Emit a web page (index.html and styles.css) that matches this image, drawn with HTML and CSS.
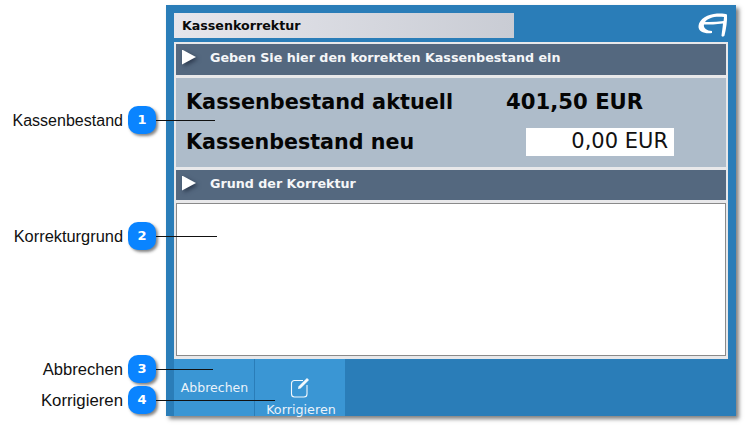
FILE: index.html
```html
<!DOCTYPE html>
<html lang="de">
<head>
<meta charset="utf-8">
<title>Kassenkorrektur</title>
<link rel="stylesheet" href="styles.css">
</head>
<body>
<main class="stage">
  <section class="window">
    <header class="topbar">
      <h1 class="title">Kassenkorrektur</h1>
      <svg class="logo" viewBox="0 0 30 24" width="30" height="24" aria-hidden="true">
        <path fill-rule="evenodd" d="M14 20C7 21 0 19 .5 13C1 6 10 1 19 .5C23 .2 27 .5 29 1.5C29.5 8 28 16 26.5 22.5C26 24 23.5 24 23.5 22.5C24 18 24.7 14 25 10.5C18 11.5 12 11.5 6 11.5C5 15 9 18 14 18ZM7 9C10 5 16 3 26 4L25.6 8C19 9 13 9.3 7 9Z" fill="#fff"/>
      </svg>
    </header>
    <div class="panel">
      <h2 class="band"><span class="arrow"></span>Geben Sie hier den korrekten Kassenbestand ein</h2>
      <div class="balance">
        <div class="row">
          <span class="label label-now">Kassenbestand aktuell</span>
          <span class="current">401,50 EUR</span>
        </div>
        <div class="row">
          <span class="label label-new">Kassenbestand neu</span>
          <span class="amount">0,00 EUR</span>
        </div>
      </div>
      <h2 class="band band-second"><span class="arrow"></span>Grund der Korrektur</h2>
      <div class="reason"></div>
    </div>
    <nav class="actions">
      <button class="action action-cancel" type="button">Abbrechen</button>
      <button class="action action-fix" type="button">
        <svg viewBox="0 0 22 22" width="22" height="22" aria-hidden="true">
          <path d="M14 3.500H5A3 3 0 0 0 2.500 6.500V17A3 3 0 0 0 5.500 20H15A3 3 0 0 0 18 17V8" fill="none" stroke="#f2f8fc" stroke-width="1.1"/>
          <path d="M9 12L9.500 9.500L18 1L20 3L11.500 11.500Z" fill="#f2f8fc"/>
        </svg>
        <span class="action-text">Korrigieren</span>
      </button>
    </nav>
  </section>

  <div class="callout callout-1"><span class="callout-text">Kassenbestand</span><span class="badge">1</span><span class="leader"></span></div>
  <div class="callout callout-2"><span class="callout-text">Korrekturgrund</span><span class="badge">2</span><span class="leader"></span></div>
  <div class="callout callout-3"><span class="callout-text">Abbrechen</span><span class="badge">3</span><span class="leader"></span></div>
  <div class="callout callout-4"><span class="callout-text">Korrigieren</span><span class="badge">4</span><span class="leader"></span></div>
</main>
</body>
</html>
```
FILE: styles.css
```css
* { box-sizing: border-box; }
html, body { margin: 0; background: #fff; }
body { width: 745px; height: 427px; overflow: hidden; }
.stage { position: relative; width: 745px; height: 427px; padding: 5px 0 0 166px; }

.window {
  width: 570px;
  height: 411px;
  padding: 8px 8px 0;
  background: #2a7db8;
  box-shadow: 3px 3px 4px rgba(60, 60, 60, .65);
  display: flex;
  flex-direction: column;
}
.topbar { height: 25px; display: flex; justify-content: space-between; position: relative; }
.title {
  width: 340px;
  height: 25px;
  margin: 0;
  padding-left: 8px;
  font: bold 12.65px/26px "DejaVu Sans", sans-serif;
  color: #0a0a0a;
  background: linear-gradient(90deg, #e6e6ec, #c9ccd4);
}
.logo { position: absolute; right: 0; top: 0; }

.panel {
  margin-top: 4px;
  height: 317px;
  padding: 2px 2px 3px;
  background: #e8e8ea;
  display: flex;
  flex-direction: column;
}
.band {
  height: 31px;
  margin: 0;
  padding: 0 0 5px 6px;
  display: flex;
  align-items: center;
  gap: 14px;
  font: bold 12.7px "DejaVu Sans", sans-serif;
  color: #f4f6f8;
  background: #54687f;
}
.band-second { height: 30px; margin-top: 3px; padding-bottom: 4px; }
.arrow {
  width: 14px;
  height: 15px;
  filter: drop-shadow(2px 2px 2px rgba(25, 35, 55, .7));
}
.arrow::before {
  content: "";
  display: block;
  width: 14px;
  height: 15px;
  background: #fff;
  clip-path: polygon(0 0, 100% 50%, 0 100%);
}
.balance {
  height: 89px;
  margin-top: 3px;
  padding: 9px 10px 0;
  background: #aebcca;
  display: flex;
  flex-direction: column;
  gap: 11px;
}
.row { height: 29px; display: flex; align-items: center; position: relative; }
.label { font: bold 20.8px "DejaVu Sans", sans-serif; color: #050505; }
.label-new { font-size: 20.65px; }
.current { position: absolute; left: 320px; font: bold 21.2px "DejaVu Sans", sans-serif; color: #050505; }
.amount {
  position: absolute;
  left: 340px;
  top: 1px;
  width: 148px;
  height: 28px;
  padding-right: 6px;
  background: #fff;
  text-align: right;
  font: 21px/26px "DejaVu Sans", sans-serif;
  color: #111;
}
.reason {
  flex: 1;
  margin-top: 3px;
  background: #fff;
  border: 1px solid #8a8a8a;
}

.actions { flex: 1; display: flex; }
.action {
  height: 57px;
  padding: 0;
  border: 0;
  background: #3a96d4;
  color: #e9f2fa;
  font: 12.5px "DejaVu Sans", sans-serif;
  display: flex;
  flex-direction: column;
  align-items: center;
  justify-content: flex-end;
}
.action-cancel { width: 81px; padding: 0 0 21px 1px; border-right: 1px solid #2a7db8; }
.action-fix { width: 90px; gap: 3px; font-size: 12.75px; }
.action-text { margin: 0 0 -1px 2px; }

.callout { position: absolute; left: 0; height: 28px; display: flex; align-items: center; }
.callout-text {
  width: 123px;
  padding-top: 1px;
  text-align: right;
  white-space: nowrap;
  font: 16.4px "Liberation Sans", sans-serif;
  color: #111;
}
.badge {
  width: 28px;
  height: 28px;
  margin-left: 5px;
  border-radius: 10px;
  background: #0a84ff;
  box-shadow: 2px 2px 3px rgba(50, 50, 50, .6);
  color: #fff;
  text-align: center;
  font: bold 13px/28px "DejaVu Sans", sans-serif;
}
.leader { height: 1px; margin-top: 1px; background: #111; }
.callout-1 { top: 106px; }
.callout-2 { top: 222px; }
.callout-3 { top: 355px; }
.callout-4 { top: 386px; }
.callout-1 .callout-text { font-size: 16.05px; }
.callout-3 .callout-text { font-size: 16.6px; }
.callout-4 .callout-text { font-size: 16.8px; }
.callout-1 .leader { width: 59px; }
.callout-2 .leader { width: 61px; }
.callout-3 .leader { width: 57px; }
.callout-4 .leader { width: 119px; }
```
